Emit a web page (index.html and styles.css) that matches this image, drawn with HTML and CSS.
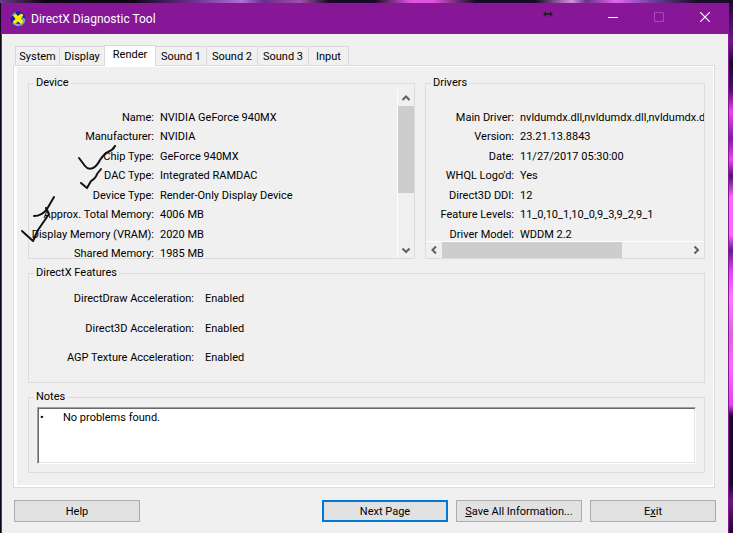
FILE: index.html
```
<!DOCTYPE html>
<html lang="en">
<head>
    <meta charset="UTF-8">
    <title>DirectX Diagnostic Tool</title>
    <meta name="viewport" content="width=device-width, initial-scale=1.0">
    <link rel="stylesheet" href="styles.css">
</head>
<body>
    <div class="window">
        <header class="titlebar">
            <svg class="app-icon" width="16" height="16" viewBox="0 0 16 16">
                <circle cx="8" cy="8" r="7.5" fill="#1426a0"/>
                <path d="M9 15.400a7.500 7.500 0 0 0 6.500-7.400L12 6z" fill="#7d97b8"/>
                <path d="M2 12q2 3 6 3.500l2-2.500z" fill="#8ea6d8"/>
                <path d="M1 6Q2 2 6 .800L5 3z" fill="#6c8cc8"/>
                <path d="M3 4.500L5.500 2.500 8 5l3-2.500L13.500 4 11 7.500l2.500 3.500-2.500 2L8 10.500 5 13l-2.500-2L5.500 8z" fill="#ffee00"/>
            </svg>
            <h1>DirectX Diagnostic Tool</h1>
            <button class="caption" aria-label="Minimize">
                <svg width="10" height="10" viewBox="0 0 10 10"><path d="M0 5.500h10" stroke="#fff"/></svg>
            </button>
            <button class="caption" aria-label="Maximize" disabled>
                <svg width="10" height="10" viewBox="0 0 10 10"><path d="M.5.5h9v9h-9z" fill="none" stroke="#a94bb3"/></svg>
            </button>
            <button class="caption" aria-label="Close">
                <svg width="10" height="10" viewBox="0 0 10 10"><path d="M0 0l10 10M10 0L0 10" stroke="#fff" stroke-width="1.200"/></svg>
            </button>
            <svg class="resize-cursor" width="10" height="6" viewBox="0 0 10 6">
                <path d="M0 3l3-3v2h4V0l3 3-3 3V4H3v2z" fill="#222"/>
            </svg>
        </header>

        <main>
            <div class="tabs" role="tablist">
                <button role="tab">System</button>
                <button role="tab">Display</button>
                <button role="tab" class="active" aria-selected="true">Render</button>
                <button role="tab" class="wide">Sound 1</button>
                <button role="tab" class="wide">Sound 2</button>
                <button role="tab" class="wide">Sound 3</button>
                <button role="tab" class="narrow">Input</button>
            </div>

            <div class="panel" role="tabpanel">
                <div class="columns">
                    <fieldset class="device">
                        <legend>Device</legend>
                        <div class="scroll-y">
                            <dl class="info">
                                <dt>Name:</dt><dd>NVIDIA GeForce 940MX</dd>
                                <dt>Manufacturer:</dt><dd>NVIDIA</dd>
                                <dt>Chip Type:</dt><dd>GeForce 940MX</dd>
                                <dt>DAC Type:</dt><dd>Integrated RAMDAC</dd>
                                <dt>Device Type:</dt><dd>Render-Only Display Device</dd>
                                <dt>Approx. Total Memory:</dt><dd>4006 MB</dd>
                                <dt>Display Memory (VRAM):</dt><dd>2020 MB</dd>
                                <dt>Shared Memory:</dt><dd>1985 MB</dd>
                            </dl>
                            <div class="bar vertical">
                                <svg width="16" height="16" viewBox="0 0 16 16"><path d="M4.500 10L8 6.500l3.500 3.500"/></svg>
                                <div class="track"><div class="thumb"></div></div>
                                <svg width="16" height="16" viewBox="0 0 16 16"><path d="M4.500 6.500L8 10l3.500-3.500"/></svg>
                            </div>
                        </div>
                    </fieldset>

                    <fieldset class="drivers">
                        <legend>Drivers</legend>
                        <div class="scroll-x">
                            <dl class="info">
                                <dt>Main Driver:</dt><dd>nvldumdx.dll,nvldumdx.dll,nvldumdx.dll</dd>
                                <dt>Version:</dt><dd>23.21.13.8843</dd>
                                <dt>Date:</dt><dd>11/27/2017 05:30:00</dd>
                                <dt>WHQL Logo'd:</dt><dd>Yes</dd>
                                <dt>Direct3D DDI:</dt><dd>12</dd>
                                <dt>Feature Levels:</dt><dd>11_0,10_1,10_0,9_3,9_2,9_1</dd>
                                <dt>Driver Model:</dt><dd>WDDM 2.2</dd>
                            </dl>
                            <div class="bar horizontal">
                                <svg width="16" height="16" viewBox="0 0 16 16"><path d="M10 4.500L6.500 8l3.500 3.500"/></svg>
                                <div class="track"><div class="thumb"></div></div>
                                <svg width="16" height="16" viewBox="0 0 16 16"><path d="M6.500 4.500L10 8l-3.500 3.500"/></svg>
                            </div>
                        </div>
                    </fieldset>
                </div>

                <fieldset class="features">
                    <legend>DirectX Features</legend>
                    <dl class="info">
                        <dt>DirectDraw Acceleration:</dt><dd>Enabled</dd>
                        <dt>Direct3D Acceleration:</dt><dd>Enabled</dd>
                        <dt>AGP Texture Acceleration:</dt><dd>Enabled</dd>
                    </dl>
                </fieldset>

                <fieldset class="notes">
                    <legend id="notes-label">Notes</legend>
                    <textarea aria-labelledby="notes-label" readonly>•&#9;No problems found.</textarea>
                </fieldset>
            </div>

            <div class="actions">
                <button class="help">Help</button>
                <button class="default">Next Page</button>
                <button><u>S</u>ave All Information...</button>
                <button>E<u>x</u>it</button>
            </div>
        </main>

        <!-- hand drawn ticks -->
        <svg class="ticks" width="100" height="100" viewBox="20 145 100 100">
            <path d="M79 158l6 8q3 4 8 2 4-2 7-8 4-6 8-8 5-2 7-6"/>
            <path d="M81 183l6 5 4-7q5-3 6-7l4-5"/>
            <path d="M34 216q8 0 13-7l7-12"/>
            <path d="M22 231l11 10 5-11 11-16-3-6"/>
        </svg>
    </div>
</body>
</html>
```
FILE: styles.css
```
body {
    margin: 0;
    height: 100vh;
    box-sizing: border-box;
    padding: 3px 4px 0 1px;
    display: flex;
    overflow: hidden;
    font-family: Roboto, sans-serif;
    font-size: 11px;
    line-height: 14px;
    color: #000;
    background:
        linear-gradient(90deg, #6a3a8c 0, #0c0414 6%, #0c0414 18%, #6a2c8c 26%, #b070d8 33%, #6a2c8c 36%, #a050a8 41%, #180828 45%, #180828 51%, #e055e0 56%, #e055e0 59%, #180828 65%, #180828 73%, #d890e0 78%, #66308c 80%, #e466ee 84%, #7040a0 89%, #1a0c28 95%) top / 100% 3px no-repeat,
        linear-gradient(#1a0a2c 0, #6a1c8c 8%, #160a24 12%, #4a1270 17%, #ee44f4 21%, #7c1ca4 26%, #ee44f4 30%, #4a1270 33%, #ff66ff 37%, #ff66ff 44%, #5a2088 47%, #e044ff 51%, #ff77ff 56%, #d866dd 63%, #ff66ff 69%, #e044ee 76%, #180828 78%, #180828 91%, #6a1c7c 94%, #180828 100%) right / 4px 100% no-repeat,
        #12061c;
}

.window {
    position: relative;
    flex: 1;
    display: flex;
    flex-direction: column;
    border: 1px solid #881798;
    border-bottom: 0;
    background: #f0f0f0;
}

.titlebar {
    position: relative;
    display: flex;
    align-items: center;
    height: 30px;
    padding-left: 8px;
    background: #881798;
    color: #fff;
}

.titlebar h1 {
    flex: 1;
    margin: 0 0 0 5px;
    font-size: 12px;
    font-weight: normal;
}

.caption {
    width: 46px;
    height: 30px;
    padding: 0;
    border: 0;
    background: none;
}

.resize-cursor {
    position: absolute;
    top: 7px;
    right: 175px;
}

main {
    padding: 11px 13px 10px 11px;
}

button {
    font: inherit;
    color: inherit;
}

.tabs {
    display: flex;
    align-items: flex-end;
    padding-left: 2px;
}

.tabs button {
    width: 45px;
    height: 19px;
    padding: 2px 0 0;
    border: 1px solid #d9d9d9;
    border-width: 1px 1px 0 0;
    background: #f0f0f0;
}

.tabs button:first-child {
    border-left-width: 1px;
}

.tabs .active {
    width: 52px;
    height: 21px;
    margin-bottom: -1px;
    padding: 0 0 2px;
    border-left-width: 1px;
    margin-left: -1px;
    background: #fff;
    z-index: 1;
}

.tabs .wide {
    width: 51px;
}

.tabs .narrow {
    width: 40px;
}

.panel {
    display: flex;
    flex-direction: column;
    gap: 7px;
    padding: 10px 9px 14px 14px;
    border: 1px solid #dcdcdc;
    box-shadow: inset 3px 1px #fff, inset -1px -2px #fff;
}

.columns {
    display: grid;
    grid-template-columns: 387fr 280fr;
    gap: 10px;
}

fieldset {
    min-width: 0;
    margin: 0;
    padding: 0;
    border: 1px solid #dcdcdc;
}

legend {
    margin-left: 5px;
    padding: 0 2px;
}

.info {
    display: grid;
    grid-template-columns: 125px 1fr;
    grid-auto-rows: 19px 20px;
    column-gap: 6px;
    align-items: center;
    flex: 1;
    min-width: 0;
    margin: 0;
    white-space: nowrap;
}

dt {
    text-align: right;
}

dd {
    margin: 0;
}

.scroll-y {
    display: flex;
    height: 168px;
}

.scroll-y .info,
.scroll-x .info {
    padding-top: 18px;
}

.scroll-x {
    display: flex;
    flex-direction: column;
    height: 168px;
}

.drivers .info {
    grid-template-columns: 88px 1fr;
    min-height: 0;
    box-sizing: border-box;
    overflow: hidden;
}

.bar {
    display: flex;
}

.bar svg {
    flex: none;
    fill: none;
    stroke: #606060;
    stroke-width: 2;
}

.track {
    flex: 1;
}

.thumb {
    background: #cdcdcd;
}

.vertical {
    flex-direction: column;
    border-left: 1px solid #fff;
}

.vertical .thumb {
    height: 64%;
}

.horizontal {
    border-top: 1px solid #fff;
}

.horizontal .thumb {
    width: 73%;
    height: 100%;
}

.features .info {
    grid-template-columns: 165px 1fr;
    grid-auto-rows: 30px 29px;
    column-gap: 11px;
    padding: 4px 0 9px;
}

.notes {
    padding: 3px 8px 8px;
}

.notes legend {
    margin-left: -3px;
}

textarea {
    display: block;
    width: 100%;
    height: 57px;
    box-sizing: border-box;
    padding: 3px 2px 2px;
    border: 1px solid;
    border-color: #a0a0a0 #fff #fff #a0a0a0;
    box-shadow: inset 1px 1px #696969, inset -1px -1px #e3e3e3;
    background: #fff;
    font: inherit;
    color: inherit;
    resize: none;
    tab-size: 23px;
}

.actions {
    display: flex;
    gap: 8px;
    padding-top: 12px;
    margin: 0 -1px 0 1px;
}

.actions button {
    width: 126px;
    height: 22px;
    padding: 2px 0 0;
    border: 1px solid #adadad;
    background: #e1e1e1;
}

.actions .help {
    margin-right: auto;
}

.actions .default {
    border: 2px solid #0078d7;
}

.ticks {
    position: absolute;
    top: 141px;
    left: 18px;
    fill: none;
    stroke: #111;
    stroke-width: 2;
    stroke-linecap: round;
    stroke-linejoin: round;
}
```
